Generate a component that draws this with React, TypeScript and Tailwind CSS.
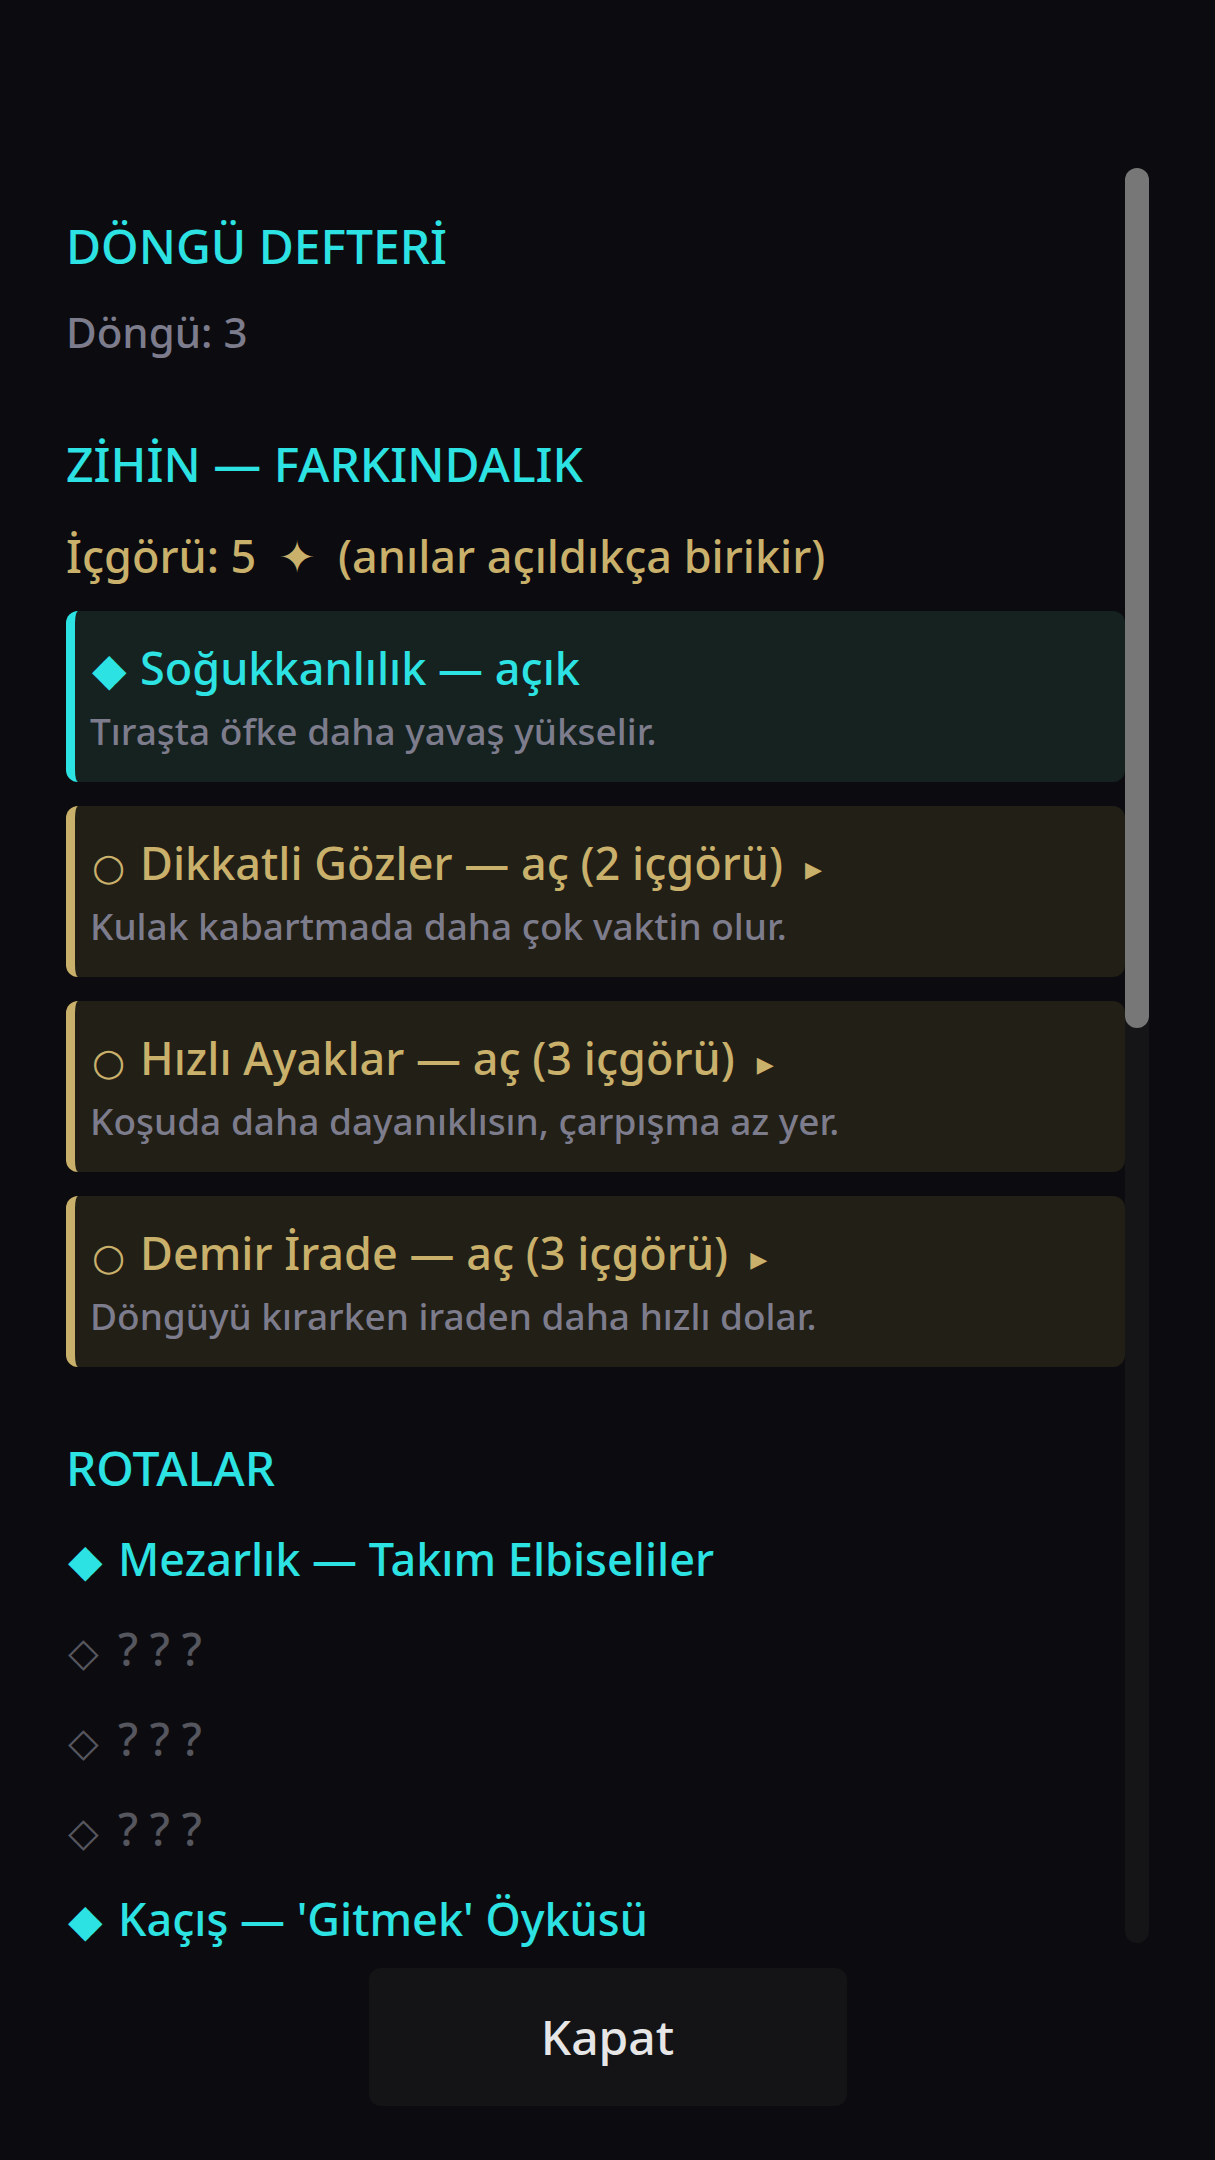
import React from 'react';

// A perk in the "mind" section: either unlocked or still buyable with insight
type PerkType = {
  id: string;
  name: string;
  cost: number;
  unlocked: boolean;
  description: string;
};

type RouteType = {
  id: number;
  label: string | null;
};

const perks: PerkType[] = [
  { id: 'calm', name: 'Soğukkanlılık', cost: 0, unlocked: true, description: 'Tıraşta öfke daha yavaş yükselir.' },
  { id: 'eyes', name: 'Dikkatli Gözler', cost: 2, unlocked: false, description: 'Kulak kabartmada daha çok vaktin olur.' },
  { id: 'feet', name: 'Hızlı Ayaklar', cost: 3, unlocked: false, description: 'Koşuda daha dayanıklısın, çarpışma az yer.' },
  { id: 'will', name: 'Demir İrade', cost: 3, unlocked: false, description: 'Döngüyü kırarken iraden daha hızlı dolar.' },
];

const routes: RouteType[] = [
  { id: 1, label: 'Mezarlık — Takım Elbiseliler' },
  { id: 2, label: null },
  { id: 3, label: null },
  { id: 4, label: null },
  { id: 5, label: "Kaçış — 'Gitmek' Öyküsü" },
];

const PerkCard: React.FC<{ perk: PerkType }> = ({ perk }) => {
  if (perk.unlocked) {
    return (
      <div className="rounded-[12px] border-l-[9px] border-[#2de2e2] bg-[#152220] py-[24px] pl-[15px] pr-[24px]">
        <p className="h-[66px] text-[45px] leading-[66px] font-medium text-[#2de2e2]">
          <span className="inline-block w-[50px] pl-[2px]">◆</span>
          {perk.name} — açık
        </p>
        <p className="mt-[3px] h-[54px] text-[37px] leading-[54px] font-medium text-[#7d7c8c]">{perk.description}</p>
      </div>
    );
  }
  return (
    <div className="rounded-[12px] border-l-[9px] border-[#c9b06b] bg-[#211f16] py-[24px] pl-[15px] pr-[24px]">
      <p className="h-[66px] text-[45px] leading-[66px] font-medium text-[#c9b06b]">
        <span className="inline-block w-[50px] pl-[2px] text-[38px]">○</span>
        {perk.name} — aç ({perk.cost} içgörü)
        <span className="ml-[22px] text-[34px]">▸</span>
      </p>
      <p className="mt-[3px] h-[54px] text-[37px] leading-[54px] font-medium text-[#7d7c8c]">{perk.description}</p>
    </div>
  );
};

const App: React.FC = () => {
  return (
    <div className="flex h-[2160px] flex-col overflow-hidden bg-[#0c0c10] pt-[168px] pb-[54px] pl-[66px] pr-[66px] font-['Noto_Sans','DejaVu_Sans',sans-serif]">
      <div className="flex min-h-0 flex-1">
        {/* ledger content */}
        <div className="min-w-0 flex-1 pt-[42px]">
          <h2 className="text-[48px] leading-[72px] font-medium text-[#2de2e2]">DÖNGÜ DEFTERİ</h2>
          <p className="mt-[18px] text-[42px] leading-[63px] font-medium text-[#7d7c8c]">Döngü: 3</p>

          <h2 className="mt-[65px] text-[48px] leading-[72px] font-medium text-[#2de2e2]">ZİHİN — FARKINDALIK</h2>
          <p className="mt-[24px] h-[63px] text-[45px] leading-[63px] font-medium text-[#c9b06b]">
            İçgörü: 5<span className="mx-[22px]">✦</span>(anılar açıldıkça birikir)
          </p>

          <div className="mt-[24px] flex flex-col gap-[24px]">
            {perks.map((perk) => (
              <PerkCard key={perk.id} perk={perk} />
            ))}
          </div>

          <h2 className="mt-[65px] text-[48px] leading-[72px] font-medium text-[#2de2e2]">ROTALAR</h2>
          <div className="mt-[10px]">
            {routes.map((route) =>
              route.label ? (
                <p key={route.id} className="h-[90px] text-[45px] leading-[90px] font-medium text-[#2de2e2]">
                  <span className="inline-block w-[52px] pl-[2px]">◆</span>
                  {route.label}
                </p>
              ) : (
                <p key={route.id} className="h-[90px] text-[45px] leading-[90px] font-medium text-[#56565f]">
                  <span className="inline-block w-[52px] pl-[2px] text-[40px]">◇</span>? ? ?
                </p>
              )
            )}
          </div>
        </div>

        {/* scrollbar */}
        <div className="w-[24px] shrink-0 rounded-full bg-[#151517]">
          <div className="h-[860px] rounded-full bg-[#777777]" />
        </div>
      </div>

      <button className="mt-[25px] h-[138px] w-[478px] shrink-0 self-center rounded-[12px] bg-[#141416] text-[48px] font-medium text-[#e6e6e6]">
        Kapat
      </button>
    </div>
  );
};

export default App;
